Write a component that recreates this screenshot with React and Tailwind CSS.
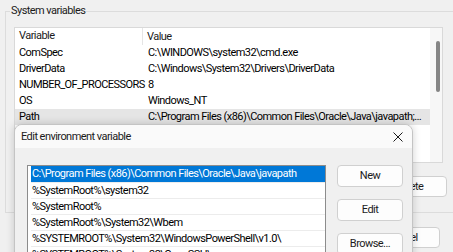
import React from "react";

const sysVars = [
  { name: "ComSpec", value: "C:\\WINDOWS\\system32\\cmd.exe" },
  { name: "DriverData", value: "C:\\Windows\\System32\\Drivers\\DriverData" },
  { name: "NUMBER_OF_PROCESSORS", value: "8" },
  { name: "OS", value: "Windows_NT" },
  {
    name: "Path",
    value:
      "C:\\Program Files (x86)\\Common Files\\Oracle\\Java\\javapath;C:\\WINDOWS\\system32;C:\\WINDOWS",
  },
  { name: "PATHEXT", value: ".COM;.EXE;.BAT;.CMD" },
  { name: "PROCESSOR_ARCHITECTURE", value: "AMD64" },
];

const pathEntries = [
  "C:\\Program Files (x86)\\Common Files\\Oracle\\Java\\javapath",
  "%SystemRoot%\\system32",
  "%SystemRoot%",
  "%SystemRoot%\\System32\\Wbem",
  "%SYSTEMROOT%\\System32\\WindowsPowerShell\\v1.0\\",
  "%SYSTEMROOT%\\System32\\OpenSSH\\",
];

function WinButton({ children, className = "" }) {
  return (
    <button
      className={
        "shrink-0 rounded-[4px] border border-[#d0d0d0] bg-[#fdfdfd] text-[#1b1b1b] " +
        className
      }
    >
      {children}
    </button>
  );
}

export default function App() {
  return (
    <div
      className="relative w-[453px] h-[252px] overflow-hidden bg-[#f0f0f0] text-[11px] leading-[16px] tracking-[-0.55px] text-black"
      style={{ fontFamily: 'Roboto, "Noto Sans", sans-serif' }}
    >
      {/* System variables group */}
      <fieldset className="ml-[5px] mt-[3px] w-[470px] h-[210px] border border-[#dcdcdc]">
        <legend className="ml-[4px] px-[1px] leading-[16px] text-[#1b1b1b]">
          System variables
        </legend>

        <div className="ml-[8px] mt-[8px] flex w-[429px] h-[136px] border border-[#d9d9d9] bg-white">
          <div className="flex-1 overflow-hidden">
            {/* header */}
            <div className="flex h-[17px] items-center whitespace-nowrap">
              <div className="w-[128px] shrink-0 h-full pl-[4px] border-r border-[#e5e5e5] text-[#1b1b1b]">
                Variable
              </div>
              <div className="pl-[4px] text-[#1b1b1b]">Value</div>
            </div>
            {sysVars.map((v) => (
              <div
                key={v.name}
                className={
                  "flex h-[16px] items-center whitespace-nowrap " +
                  (v.name === "Path" ? "bg-[#e5e5e5]" : "")
                }
              >
                <div className="w-[129px] shrink-0 pl-[4px]">{v.name}</div>
                <div className="w-[280px] pl-[4px] truncate">{v.value}</div>
              </div>
            ))}
          </div>
          {/* scrollbar */}
          <div className="w-[12px] shrink-0 bg-[#f7f7f7] pt-[13px] pl-[6px]">
            <div className="w-[4px] h-[51px] rounded-[2px] bg-[#858585]" />
          </div>
        </div>

        <div className="mt-[13px] flex justify-end pr-[27px]">
          <WinButton className="w-[75px] h-[21px]">Delete</WinButton>
        </div>
      </fieldset>

      <div className="mt-[14px] flex justify-end pr-[13px]">
        <WinButton className="w-[75px] h-[21px]">Cancel</WinButton>
      </div>

      {/* Edit environment variable dialog */}
      <div className="absolute left-[14px] top-[124px] w-[399px] h-[140px] rounded-t-[8px] border border-[#c4c4c4] bg-[#f0f0f0] shadow-[0_0_8px_rgba(0,0,0,0.18)] overflow-hidden">
        <div className="flex h-[23px] items-center justify-between bg-[#fafafa] pl-[6px] pr-[8px]">
          <span className="text-[#1b1b1b]">Edit environment variable</span>
          <svg width="10" height="10" viewBox="0 0 10 10" className="mr-[1px]">
            <path d="M0.5 0.5 L9.5 9.5 M9.5 0.5 L0.5 9.5" stroke="#1b1b1b" strokeWidth="1" />
          </svg>
        </div>

        <div className="flex pl-[12px] pt-[17px]">
          <div className="w-[299px] shrink-0 h-[120px] overflow-hidden border border-[#8c8c8c] bg-white pl-[3px]">
            {pathEntries.map((p, i) => (
              <div
                key={p}
                className={
                  "h-[16px] pl-[1px] whitespace-nowrap " +
                  (i === 0
                    ? "bg-[#0078d7] text-white leading-[16px]"
                    : "border-t border-[#ececec] leading-[15px]")
                }
              >
                {p}
              </div>
            ))}
          </div>
          <div className="ml-[11px] flex flex-col gap-[12px]">
            <WinButton className="w-[66px] h-[22px]">New</WinButton>
            <WinButton className="w-[66px] h-[22px]">Edit</WinButton>
            <WinButton className="w-[66px] h-[22px]">Browse...</WinButton>
          </div>
        </div>
      </div>
    </div>
  );
}
